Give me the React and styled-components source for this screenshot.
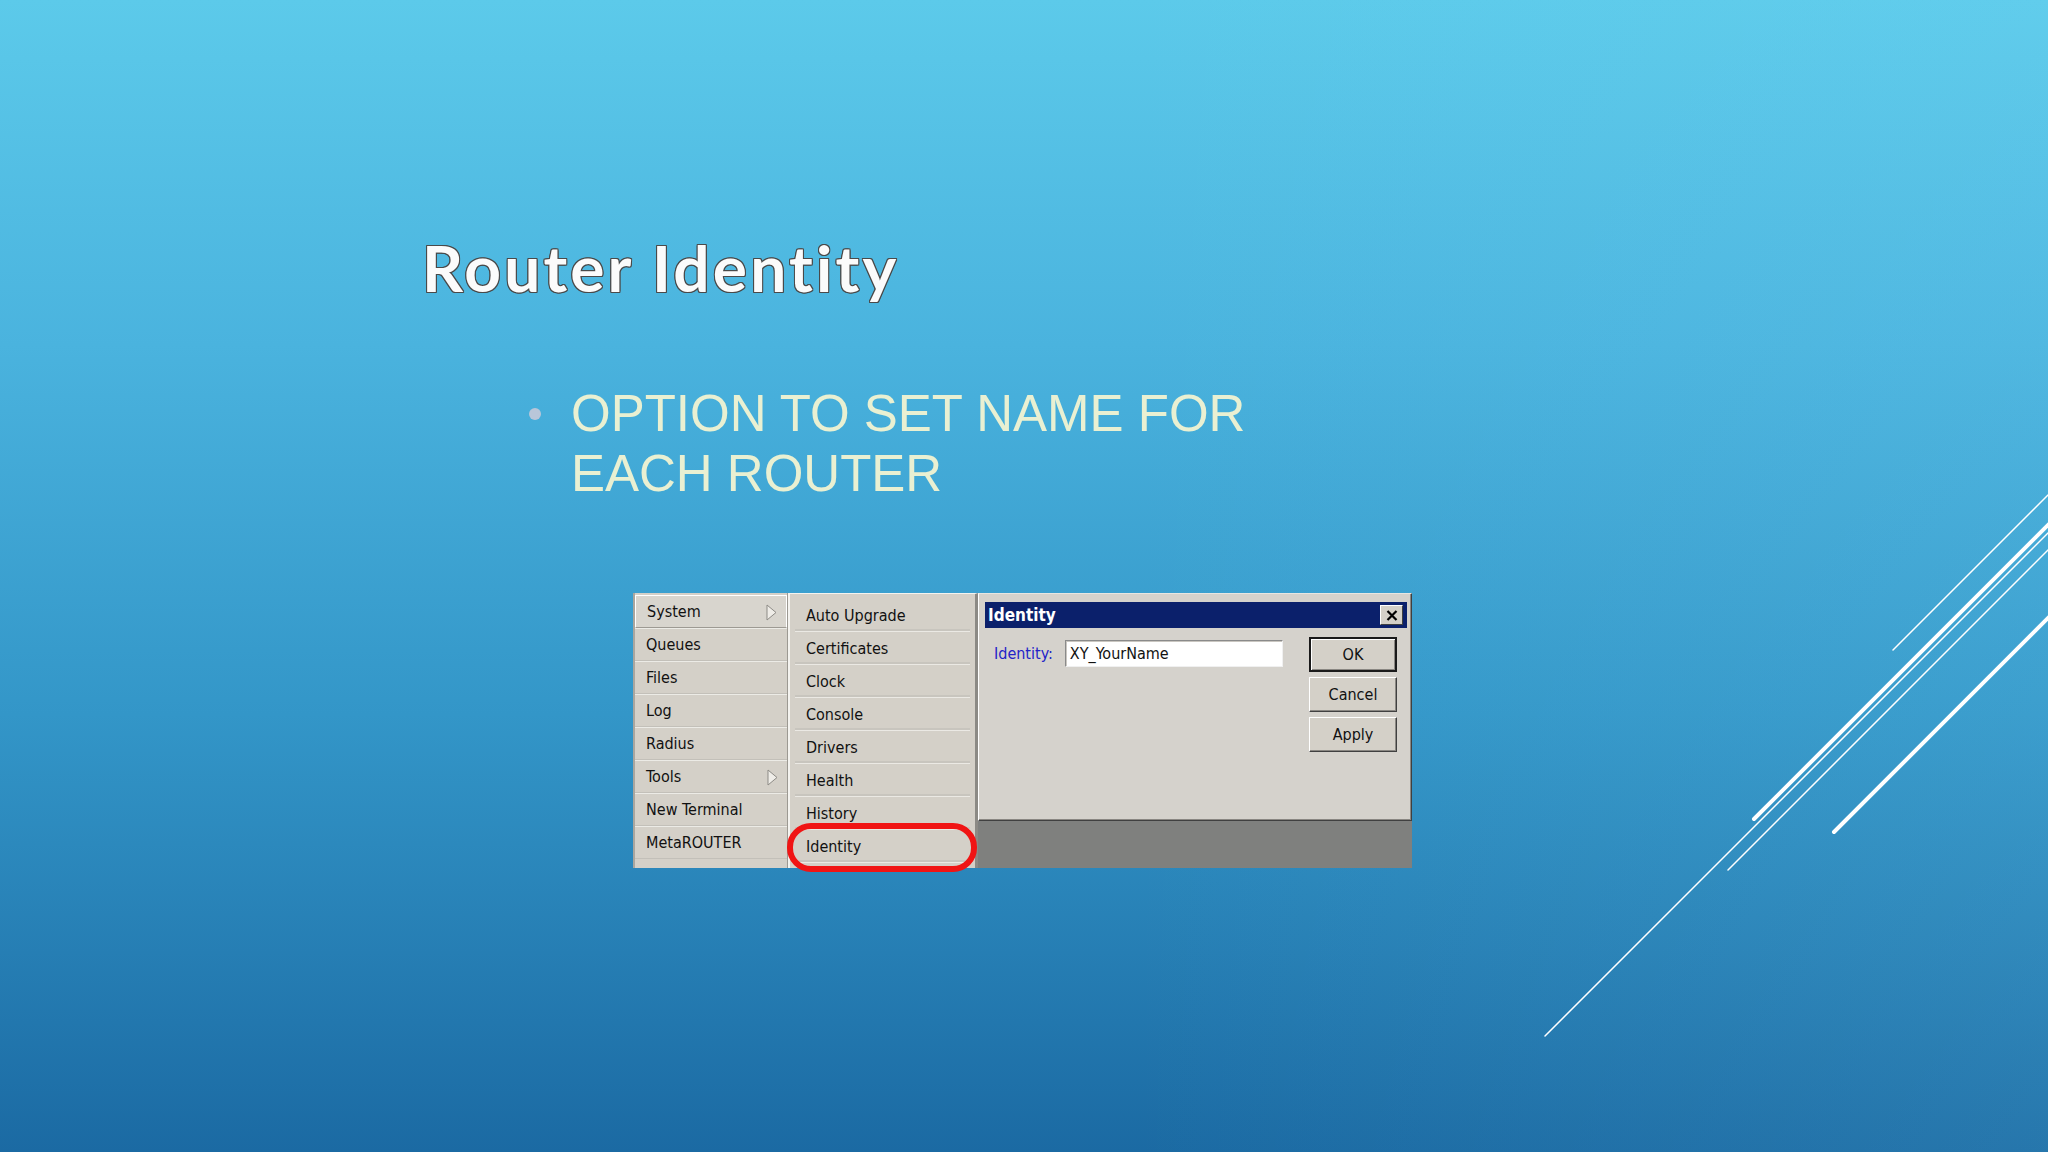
import React from 'react';
import styled, { createGlobalStyle, css } from 'styled-components';

const GlobalStyle = createGlobalStyle`
  html, body {
    margin: 0;
    padding: 0;
    overflow: hidden;
  }
`

const Slide = styled.div`
  position: relative;
  width: 2048px;
  height: 1152px;
  overflow: hidden;
  box-sizing: border-box;
  padding-top: 236px;
  background:
    linear-gradient(90deg, rgba(255,255,255,0) 55%, rgba(140,230,255,0.10) 100%),
    linear-gradient(180deg, #5ccaea 0%, #4ab3de 30%, #3396c8 62%, #1b6aa3 100%);
  font-family: "Liberation Sans", Arial, sans-serif;
`

const Title = styled.h1`
  margin: 0 0 0 422px;
  font-family: Lato, "DejaVu Sans", sans-serif;
  font-weight: 700;
  font-size: 64px;
  line-height: 64px;
  letter-spacing: 3.2px;
  color: #fbfbfb;
  text-shadow:
    1px 0 0 #4a4a4a, -1px 0 0 #4a4a4a, 0 1px 0 #4a4a4a, 0 -1px 0 #4a4a4a,
    1px 1px 0 #4a4a4a, -1px -1px 0 #4a4a4a, 1px -1px 0 #4a4a4a, -1px 1px 0 #4a4a4a;
`

const BulletList = styled.ul`
  list-style: none;
  margin: 84px 0 0 529px;
  padding: 0;
`

const Bullet = styled.li`
  display: flex;
  align-items: flex-start;
`

const Dot = styled.span`
  flex: none;
  width: 12px;
  height: 12px;
  margin-top: 24px;
  margin-right: 30px;
  border-radius: 50%;
  background: #b9c6d9;
`

const BulletText = styled.span`
  font-size: 51px;
  line-height: 60px;
  color: #e9f0d2;
  width: 720px;
`

const Composite = styled.div`
  display: flex;
  margin: 89px 0 0 633px;
  width: 779px;
  height: 275px;
  background: #d4d0c8;
`

const uiFont = css`
  font-family: "DejaVu Sans Condensed", "DejaVu Sans", sans-serif;
  font-stretch: condensed;
  font-size: 16px;
  color: #111;
`

const MainMenu = styled.div`
  width: 155px;
  box-sizing: border-box;
  padding-top: 2px;
  border-left: 2px solid #a9a69f;
  border-right: 1px solid #9c9992;
  ${uiFont}
`

const MenuRow = styled.div`
  position: relative;
  height: 33px;
  box-sizing: border-box;
  display: flex;
  align-items: center;
  padding-left: 11px;
  border-top: 1px solid #ecebe6;
  border-bottom: 1px solid #c3c0b9;
  ${p => p.$active && css`
    border: 1px solid #ffffff;
    border-bottom-color: #9d9a93;
    background: #d8d5ce;
  `}
`

const Arrow = styled.svg`
  position: absolute;
  right: 9px;
  top: 8px;
`

const SubMenu = styled.div`
  position: relative;
  width: 190px;
  box-sizing: border-box;
  padding: 5px 5px 0 5px;
  border-left: 2px solid #f4f3ef;
  border-top: 1px solid #f4f3ef;
  border-right: 3px solid #8c8a85;
  ${uiFont}
`

const SubRow = styled.div`
  height: 33px;
  box-sizing: border-box;
  display: flex;
  align-items: center;
  padding-left: 11px;
  border-bottom: 1px solid #ebe9e4;
  box-shadow: inset 0 -2px 0 #c8c5be;
`

const Highlight = styled.div`
  position: absolute;
  left: -3px;
  top: 229px;
  width: 190px;
  height: 49px;
  box-sizing: border-box;
  border: 6px solid #f01414;
  border-radius: 24px;
  pointer-events: none;
`

const Pane = styled.div`
  flex: 1;
  background: #7f807e;
`

const Window = styled.div`
  height: 228px;
  box-sizing: border-box;
  padding: 8px 4px 0 6px;
  background: #d5d2cc;
  border: 1px solid;
  border-color: #e8e6e1 #404040 #404040 #ffffff;
  box-shadow: inset -1px -1px 0 #8a8782;
`

const TitleBar = styled.div`
  height: 26px;
  display: flex;
  align-items: center;
  justify-content: space-between;
  padding: 0 4px 0 3px;
  background: #0b206b;
  font-family: "DejaVu Sans Condensed", "DejaVu Sans", sans-serif;
  font-stretch: condensed;
  font-weight: bold;
  font-size: 17px;
  color: #ffffff;
`

const CloseButton = styled.div`
  width: 23px;
  height: 20px;
  box-sizing: border-box;
  display: flex;
  align-items: center;
  justify-content: center;
  background: #d4d0c8;
  border: 1px solid;
  border-color: #ffffff #404040 #404040 #ffffff;
`

const Body = styled.div`
  display: flex;
  justify-content: space-between;
  padding: 9px 10px 0 9px;
  ${uiFont}
`

const Field = styled.div`
  display: flex;
  align-items: center;
  gap: 12px;
  margin-top: 3px;
  height: 27px;
`

const Label = styled.span`
  color: #2323c8;
`

const TextInput = styled.div`
  width: 218px;
  height: 27px;
  box-sizing: border-box;
  display: flex;
  align-items: center;
  padding-left: 4px;
  background: #ffffff;
  border: 1px solid;
  border-color: #8a8a8a #f0f0f0 #f0f0f0 #8a8a8a;
  box-shadow: inset 1px 1px 0 #c9c6c0;
`

const Buttons = styled.div`
  display: flex;
  flex-direction: column;
  gap: 5px;
`

const Button = styled.div`
  width: 88px;
  height: 35px;
  box-sizing: border-box;
  display: flex;
  align-items: center;
  justify-content: center;
  background: #d4d0c8;
  border: 1px solid;
  border-color: #ffffff #404040 #404040 #ffffff;
  box-shadow: inset -1px -1px 0 #8a8782;
  ${p => p.$default && css`
    border: 2px solid #1a1a1a;
    box-shadow: inset 1px 1px 0 #ffffff, inset -1px -1px 0 #8a8782;
  `}
`

const Decor = styled.svg`
  position: absolute;
  left: 0;
  top: 0;
  pointer-events: none;
`

const mainItems = ['System', 'Queues', 'Files', 'Log', 'Radius', 'Tools', 'New Terminal', 'MetaROUTER'];
const subItems = ['Auto Upgrade', 'Certificates', 'Clock', 'Console', 'Drivers', 'Health', 'History', 'Identity'];
const withArrow = ['System', 'Tools'];

const lines = [
  { x1: 1893, y1: 650, x2: 2048, y2: 495, w: 1.5 },
  { x1: 1754, y1: 819, x2: 2060, y2: 513, w: 4 },
  { x1: 1545, y1: 1036, x2: 2060, y2: 521, w: 1.5 },
  { x1: 1728, y1: 870, x2: 2060, y2: 538, w: 1.5 },
  { x1: 1834, y1: 832, x2: 2060, y2: 606, w: 4 },
];

const App = () => (
  <Slide>
    <GlobalStyle />
    <Title>Router Identity</Title>
    <BulletList>
      <Bullet>
        <Dot />
        <BulletText>OPTION TO SET NAME FOR EACH ROUTER</BulletText>
      </Bullet>
    </BulletList>

    <Composite>
      <MainMenu>
        {mainItems.map(item => (
          <MenuRow key={item} $active={item === 'System'}>
            {item}
            {withArrow.includes(item) && (
              <Arrow width="11" height="17" viewBox="0 0 11 17">
                <polygon points="1,1 10,8.5 1,16" fill="#efede8" stroke="#8d8b86" strokeWidth="1" />
              </Arrow>
            )}
          </MenuRow>
        ))}
      </MainMenu>

      <SubMenu>
        {subItems.map(item => (
          <SubRow key={item}>{item}</SubRow>
        ))}
        <Highlight />
      </SubMenu>

      <Pane>
        <Window>
          <TitleBar>
            Identity
            <CloseButton>
              <svg width="12" height="11" viewBox="0 0 12 11">
                <path d="M1.5 1 L10.5 10 M10.5 1 L1.5 10" stroke="#000" strokeWidth="2.2" />
              </svg>
            </CloseButton>
          </TitleBar>
          <Body>
            <Field>
              <Label>Identity:</Label>
              <TextInput>XY_YourName</TextInput>
            </Field>
            <Buttons>
              <Button $default>OK</Button>
              <Button>Cancel</Button>
              <Button>Apply</Button>
            </Buttons>
          </Body>
        </Window>
      </Pane>
    </Composite>

    <Decor width="2048" height="1152" viewBox="0 0 2048 1152">
      {lines.map((l, i) => (
        <line key={i} x1={l.x1} y1={l.y1} x2={l.x2} y2={l.y2} stroke="#ffffff" strokeWidth={l.w} strokeLinecap="round" />
      ))}
    </Decor>
  </Slide>
);

export default App;
